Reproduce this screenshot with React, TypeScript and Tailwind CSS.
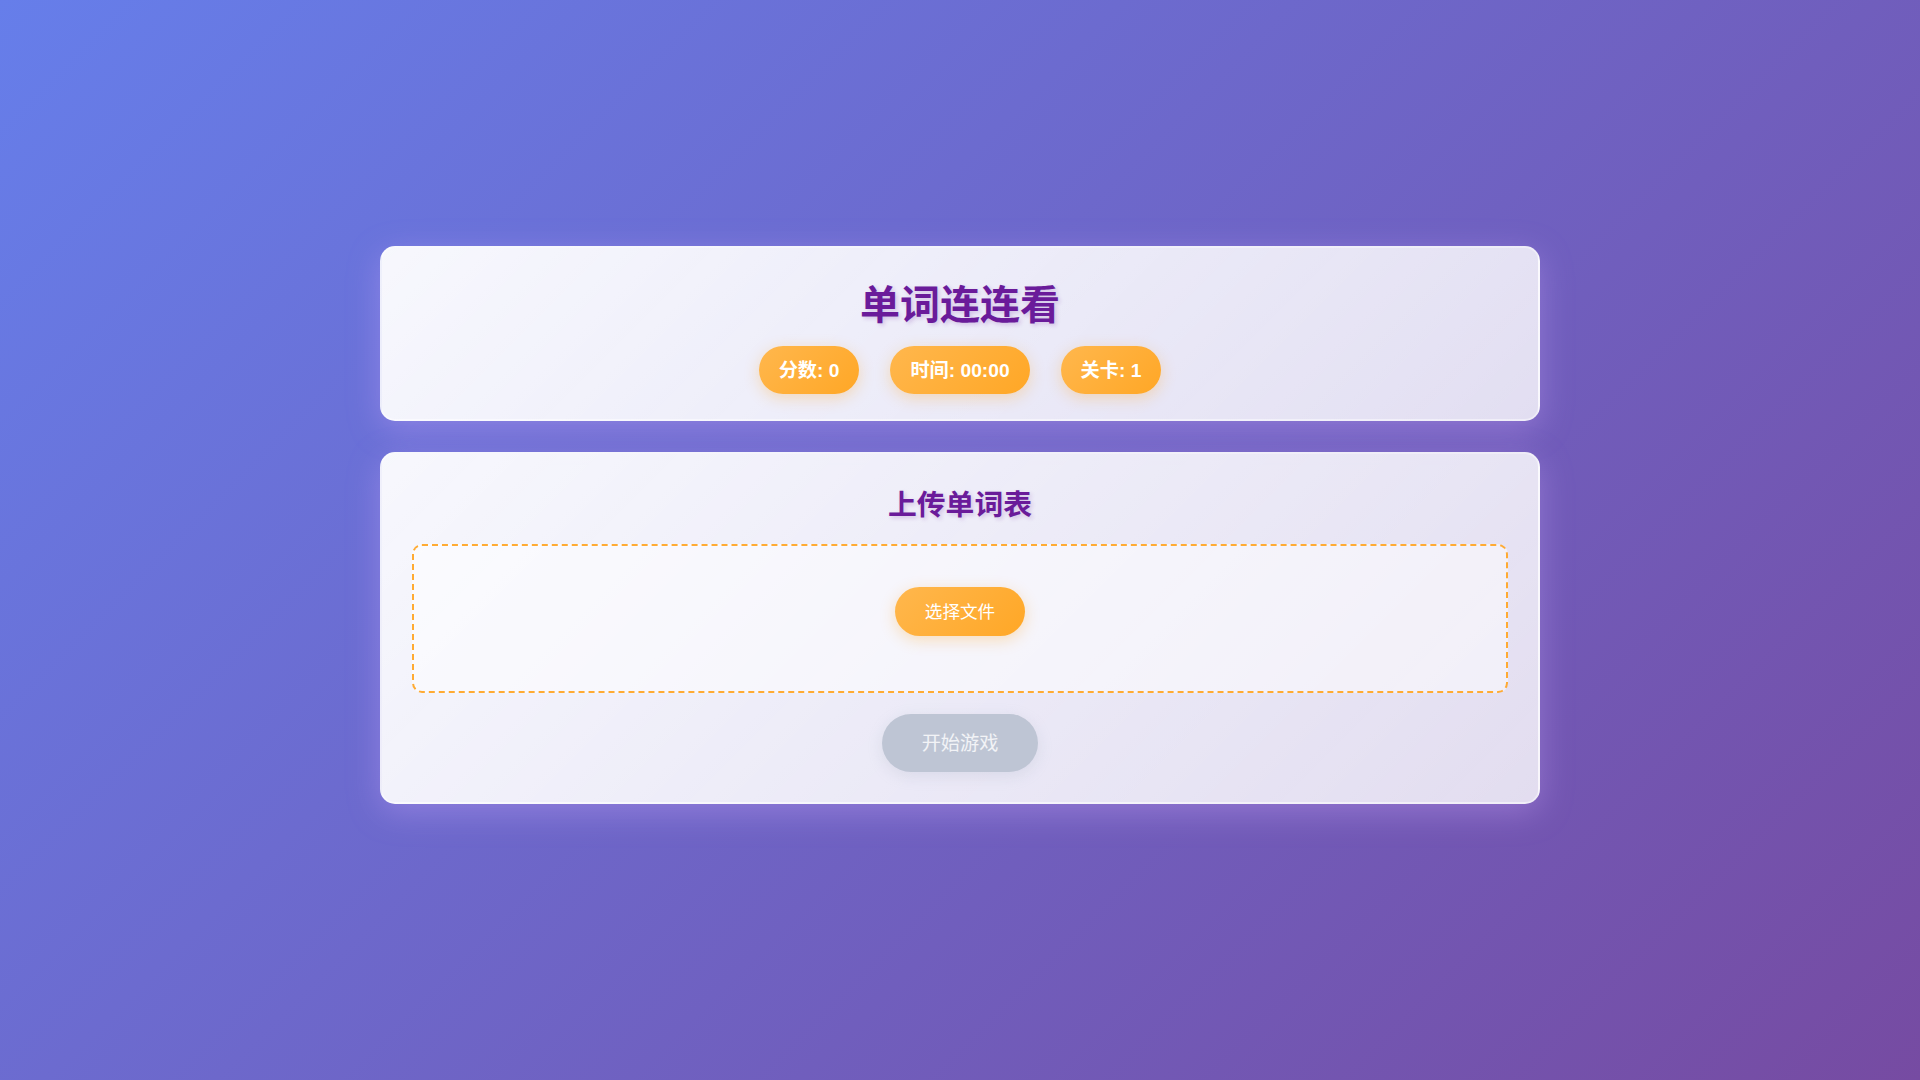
export default function App() {
  const font = { fontFamily: '"Liberation Sans", "Noto Sans CJK SC", sans-serif' };
  return (
    <div
      className="min-h-screen w-full bg-[linear-gradient(135deg,#667eea_0%,#764ba2_100%)] flex flex-col items-center pt-[246px]"
      style={font}
    >
      <div className="w-[1160px] flex flex-col gap-[31px]">
        <div className="rounded-[15px] border-2 border-white/40 bg-[linear-gradient(135deg,rgba(255,255,255,0.95),rgba(255,255,255,0.8))] shadow-[0_8px_32px_rgba(210,170,255,0.35)] pt-[28px] pb-[25px] px-[30px] flex flex-col items-center">
          <h1 className="h-[58px] leading-[58px] text-[40px] font-bold text-[#6a1b9a] [text-shadow:2px_2px_4px_rgba(106,27,154,0.2)]">
            单词连连看
          </h1>
          <div className="mt-[12px] flex gap-[31px]">
            {["分数: 0", "时间: 00:00", "关卡: 1"].map((t) => (
              <div
                key={t}
                className="h-[48px] leading-[50px] px-[20px] rounded-full text-[19.2px] font-bold text-white bg-[linear-gradient(135deg,#ffb74d,#ffa726)] shadow-[0_4px_15px_rgba(255,167,38,0.3)]"
              >
                {t}
              </div>
            ))}
          </div>
        </div>

        <div className="rounded-[15px] border-2 border-white/40 bg-[linear-gradient(135deg,rgba(255,255,255,0.95),rgba(255,255,255,0.8))] shadow-[0_8px_32px_rgba(210,170,255,0.35)] pt-[30px] pb-[30px] px-[30px] flex flex-col items-center">
          <h2 className="h-[42px] leading-[42px] text-[28.8px] font-bold text-[#6a1b9a] [text-shadow:2px_2px_4px_rgba(106,27,154,0.2)]">
            上传单词表
          </h2>
          <div className="mt-[18px] w-full rounded-[10px] border-2 border-dashed border-[#ffab33] bg-white/50 pt-[41px] pb-[55px] flex justify-center">
            <button className="h-[49px] leading-[51px] px-[30px] rounded-full text-[17.6px] text-white bg-[linear-gradient(135deg,#ffb74d,#ffa726)] shadow-[0_4px_15px_rgba(255,167,38,0.3)]">
              选择文件
            </button>
          </div>
          <button className="mt-[21px] h-[58px] leading-[60px] px-[40px] rounded-full text-[19.2px] text-white/80 bg-[#bec5d4] shadow-[0_4px_15px_rgba(150,160,180,0.2)]">
            开始游戏
          </button>
        </div>
      </div>
    </div>
  );
}
